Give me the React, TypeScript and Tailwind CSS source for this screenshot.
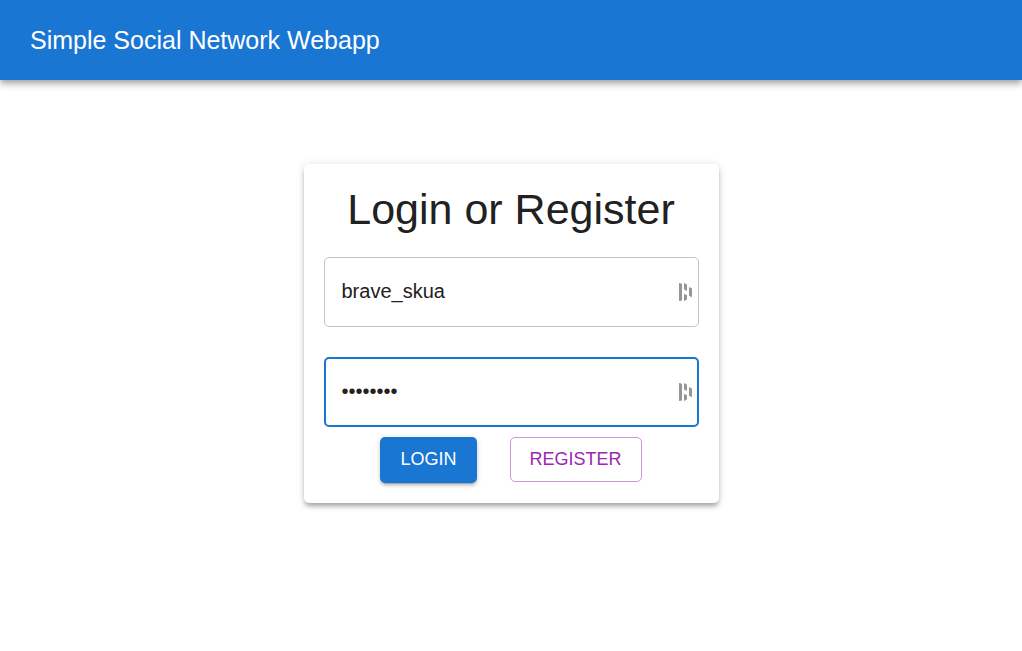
import { useState } from "react";

function ManagerIcon() {
  return (
    <svg viewBox="0 0 13 18" className="h-[18px] w-[13px]" fill="#979592" aria-hidden="true">
      <path d="M0 0 L3 0.8 V17.4 L0 18 Z" />
      <path d="M5 0 L8 1.6 V8 L5 6.6 Z" />
      <path d="M5 10.8 L8 12.2 V16.6 L5 18 Z" />
      <path d="M10 4 L13 5.4 V14.2 L10 12.8 Z" />
    </svg>
  );
}

type FieldProps = {
  label: string;
  name: string;
  type: string;
  value: string;
  active: boolean;
  onChange: (value: string) => void;
};

function Field({ label, name, type, value, active, onChange }: FieldProps) {
  return (
    <div className="relative">
      <input
        aria-label={label}
        name={name}
        type={type}
        value={value}
        onChange={(e) => onChange(e.target.value)}
        className={
          active
            ? "block h-[70px] w-full rounded-[5px] border-2 border-[#1976d2] bg-white pr-8 pb-0.5 pl-4 text-xl text-[#212121] outline-none"
            : "block h-[70px] w-full rounded-[5px] border border-[#c4c4c4] bg-white pr-8 pb-0.5 pl-[17px] text-xl text-[#212121] outline-none"
        }
      />
      <span className="pointer-events-none absolute inset-y-0 right-[7px] flex items-center">
        <ManagerIcon />
      </span>
    </div>
  );
}

export default function App() {
  const [username, setUsername] = useState("brave_skua");
  const [password, setPassword] = useState("password");

  return (
    <div className="min-h-screen bg-white font-['Liberation_Sans',Arial,sans-serif] text-[#212121]">
      <header className="flex h-20 items-center bg-[#1976d2] px-[30px] text-white shadow-[0_3px_5px_-1px_rgba(0,0,0,0.2),0_5px_6px_0_rgba(0,0,0,0.14),0_1px_13px_0_rgba(0,0,0,0.12)]">
        <h1 className="text-[25px] leading-10">Simple Social Network Webapp</h1>
      </header>
      <main className="flex justify-center px-5 pt-[84px]">
        <form
          onSubmit={(e) => e.preventDefault()}
          className="w-full max-w-[415px] rounded-[5px] bg-white p-5 shadow-[0_4px_4px_-2px_rgba(0,0,0,0.2),0_4px_5px_0_rgba(0,0,0,0.14),0_1px_10px_0_rgba(0,0,0,0.12)]"
        >
          <h2 className="mb-[22px] text-center text-[43px] leading-[51px]">Login or Register</h2>
          <div className="flex flex-col gap-[30px]">
            <Field label="Username" name="username" type="text" value={username} active={false} onChange={setUsername} />
            <Field label="Password" name="password" type="password" value={password} active onChange={setPassword} />
          </div>
          <div className="mt-2.5 flex items-start justify-center gap-[33px]">
            <button
              type="submit"
              className="h-[46px] rounded-[5px] bg-[#1976d2] px-5 pb-0.5 text-lg text-white uppercase shadow-[0_4px_1px_-3px_rgba(0,0,0,0.2),0_3px_3px_0_rgba(0,0,0,0.14),0_1px_6px_0_rgba(0,0,0,0.12)]"
            >
              Login
            </button>
            <button
              type="button"
              className="h-[45px] rounded-[5px] border border-[#ce93d8] px-[19px] pb-0.5 text-lg text-[#9c27b0] uppercase"
            >
              Register
            </button>
          </div>
        </form>
      </main>
    </div>
  );
}
